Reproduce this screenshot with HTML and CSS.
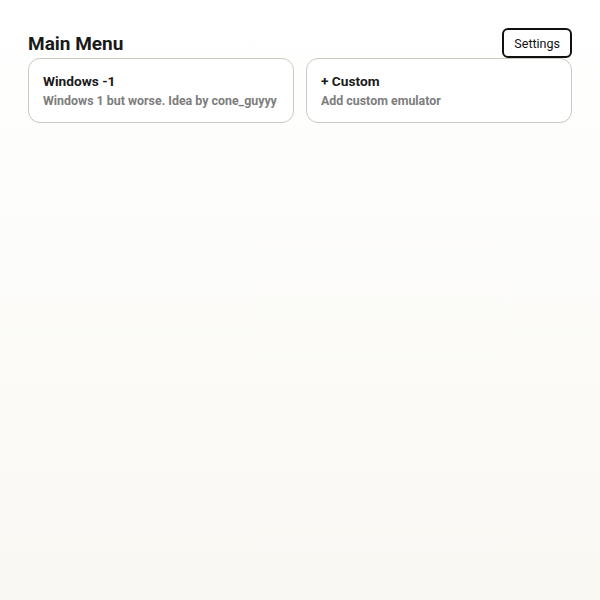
FILE: index.html
```html
<!DOCTYPE html>
<html>
<head>
<meta charset="utf-8">
<link rel="stylesheet" href="styles.css">
</head>
<body>
<div class="page">
  <div class="header">
    <h1 class="title">Main Menu</h1>
    <button class="settings">Settings</button>
  </div>
  <div class="grid">
    <div class="card">
      <div class="card-title">Windows -1</div>
      <div class="card-sub">Windows 1 but worse. Idea by cone_guyyy</div>
    </div>
    <div class="card">
      <div class="card-title">+ Custom</div>
      <div class="card-sub">Add custom emulator</div>
    </div>
  </div>
</div>
</body>
</html>
```
FILE: styles.css
```css
html, body {
  margin: 0;
  height: 100%;
}
body {
  background: linear-gradient(#ffffff, #f9f8f3);
  font-family: Roboto, "Liberation Sans", sans-serif;
  color: #1a1a1a;
}
.page {
  padding: 28px;
}
.header {
  display: flex;
  justify-content: space-between;
  align-items: center;
  height: 30px;
}
.title {
  margin: 0;
  font-size: 19px;
  font-weight: 700;
  color: #1a1a1a;
}
.settings {
  height: 30px;
  padding: 0 10px;
  border: 2px solid #111;
  border-radius: 6px;
  background: #fff;
  font-family: Roboto, "Liberation Sans", sans-serif;
  font-size: 12.5px;
  color: #111;
}
.grid {
  display: grid;
  grid-template-columns: 1fr 1fr;
  gap: 12px;
}
.card {
  background: #fff;
  border: 1px solid #cbc8c0;
  border-radius: 12px;
  padding: 13px 14px;
}
.card-title {
  font-size: 13.7px;
  font-weight: 700;
  line-height: 18px;
  color: #1a1a1a;
  margin-bottom: 3px;
}
.card-sub {
  font-size: 12.4px;
  font-weight: 700;
  line-height: 16px;
  color: #7d7d7d;
}
```
